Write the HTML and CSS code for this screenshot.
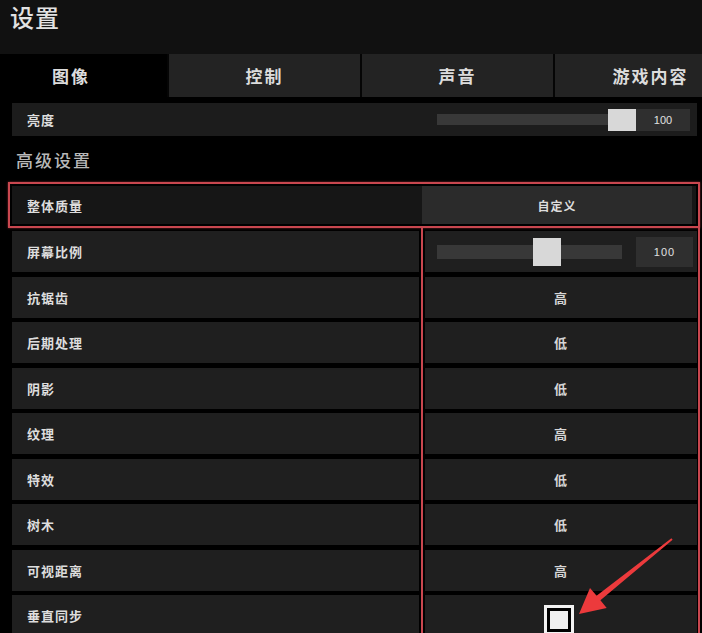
FILE: index.html
```html
<!DOCTYPE html>
<html lang="zh-CN">
<head>
  <meta charset="utf-8">
  <title>设置</title>
  <link rel="stylesheet" href="styles.css">
</head>
<body>
  <header class="top-bar">
    <h1 class="title">设置</h1>
  </header>
  <nav class="tabs">
    <div class="tab active">图像</div>
    <div class="tab">控制</div>
    <div class="tab">声音</div>
    <div class="tab">游戏内容</div>
  </nav>

  <main class="content">
    <div class="row bright">
      <div class="label">亮度</div>
      <div class="ctrl">
        <div class="track track--full"><span class="thumb" style="left: calc(100% - 28px)"></span></div>
        <div class="num num--tight">100</div>
      </div>
    </div>

    <h2 class="section">高级设置</h2>

    <div class="adv">
      <div class="qbox">
        <div class="qrow">
          <div class="qlabel">整体质量</div>
          <div class="qbtn">自定义</div>
        </div>
      </div>

      <div class="row">
        <div class="label">屏幕比例</div>
        <div class="value ctrl">
          <div class="track"><span class="thumb" style="left: 96px"></span></div>
          <div class="num">100</div>
        </div>
      </div>
      <div class="row"><div class="label">抗锯齿</div><div class="value">高</div></div>
      <div class="row"><div class="label">后期处理</div><div class="value">低</div></div>
      <div class="row"><div class="label">阴影</div><div class="value">低</div></div>
      <div class="row"><div class="label">纹理</div><div class="value">高</div></div>
      <div class="row"><div class="label">特效</div><div class="value">低</div></div>
      <div class="row"><div class="label">树木</div><div class="value">低</div></div>
      <div class="row"><div class="label">可视距离</div><div class="value">高</div></div>
      <div class="row">
        <div class="label">垂直同步</div>
        <div class="value"><span class="check"></span></div>
      </div>

      <!-- annotation overlays -->
      <div class="mark-col"></div>
      <svg class="arrow" width="702" height="460" viewBox="0 180 702 460">
        <polygon fill="#ec3a3c" points="579,612 590,586 596.6,593.7 671.4,536.2 672.6,537.8 600.4,598.3 606.7,606.1"/>
      </svg>
    </div>
  </main>
</body>
</html>
```

FILE: styles.css
```css
html, body {
  margin: 0;
  padding: 0;
}
body {
  width: 702px;
  height: 633px;
  overflow: hidden;
  background: #000;
  color: #ddd;
  font-family: "Noto Sans CJK SC", "Noto Sans", sans-serif;
  font-weight: 700;
}

.top-bar {
  height: 54px;
  background: #111;
}
.title {
  margin: 0;
  padding: 0 0 0 10px;
  font-size: 24px;
  line-height: 34px;
  font-weight: 500;
  letter-spacing: 1px;
  color: #e2e2e2;
}

.tabs {
  display: flex;
  height: 43px;
  margin-left: -25px;
  gap: 2px;
  background: #050505;
}
.tab {
  flex: 0 0 191px;
  display: flex;
  align-items: center;
  justify-content: center;
  background: #232323;
  font-size: 17px;
  letter-spacing: 2px;
  color: #dcdcdc;
}
.tab.active {
  flex-basis: 192px;
  background: #000;
}

.content {
  padding: 6px 5px 0 12px;
}

.row {
  display: flex;
  gap: 6px;
  height: 41px;
  margin-bottom: 4.5px;
}
.label, .value {
  display: flex;
  align-items: center;
  background: #1f1f1f;
  font-size: 13px;
  letter-spacing: 1px;
}
.label {
  width: 392px;
  padding-left: 15px;
}
.value {
  flex: 1;
  justify-content: center;
  color: #d6d6d6;
}

.row.bright {
  height: 33px;
  margin-bottom: 0;
  background: #1c1c1c;
}
.row.bright .label {
  background: transparent;
}
.ctrl {
  display: flex;
  align-items: center;
  flex: 1;
  padding: 0 4px 0 12px;
  justify-content: flex-start;
}
.row.bright .ctrl {
  padding-right: 7px;
}
.track {
  position: relative;
  height: 14px;
  width: 185px;
  background: #383838;
}
.track--full {
  width: 199px;
  height: 11px;
}
.thumb {
  position: absolute;
  top: 50%;
  width: 28px;
  height: 28px;
  margin-top: -14px;
  background: #d8d8d8;
}
.bright .thumb {
  height: 22px;
  margin-top: -11px;
}
.num {
  margin-left: 14px;
  width: 57px;
  height: 30px;
  display: flex;
  align-items: center;
  justify-content: center;
  background: #2f2f2f;
  font-size: 11px;
  font-weight: 400;
  color: #e0e0e0;
  font-family: "Liberation Sans Narrow", "Liberation Sans", sans-serif;
}
.num--tight {
  margin-left: 0;
  width: 54px;
  height: 22px;
}

.section {
  margin: 0;
  height: 46px;
  display: flex;
  align-items: center;
  padding-left: 4px;
  font-size: 17px;
  font-weight: 500;
  letter-spacing: 2px;
  color: #b8b8b8;
}

.adv {
  position: relative;
}
.qbox {
  margin: 0 -3px 3px -4px;
  border: 2px solid #c9474f;
  padding: 2px;
  box-shadow: 0 0 2px rgba(220, 70, 80, .6);
}
.qrow {
  display: flex;
  height: 38px;
  background: #161616;
  padding-right: 4px;
}
.qlabel {
  flex: 1;
  display: flex;
  align-items: center;
  padding-left: 15px;
  font-size: 13px;
  letter-spacing: 1px;
}
.qbtn {
  width: 270px;
  display: flex;
  align-items: center;
  justify-content: center;
  background: #2b2b2b;
  font-size: 12px;
  letter-spacing: 1px;
}

.check {
  width: 24px;
  height: 24px;
  margin-top: 8px;
  margin-right: 4px;
  border: 3px solid #f2f2f2;
  box-shadow: inset 0 0 0 3px #000;
  background: #f0f0f0;
}

.mark-col {
  position: absolute;
  top: 44px;
  left: 409px;
  right: -3px;
  bottom: -30px;
  border-left: 2px solid #c9474f;
  border-right: 2px solid #c9474f;
}
.arrow {
  position: absolute;
  left: -12px;
  top: 0;
  pointer-events: none;
}
```
